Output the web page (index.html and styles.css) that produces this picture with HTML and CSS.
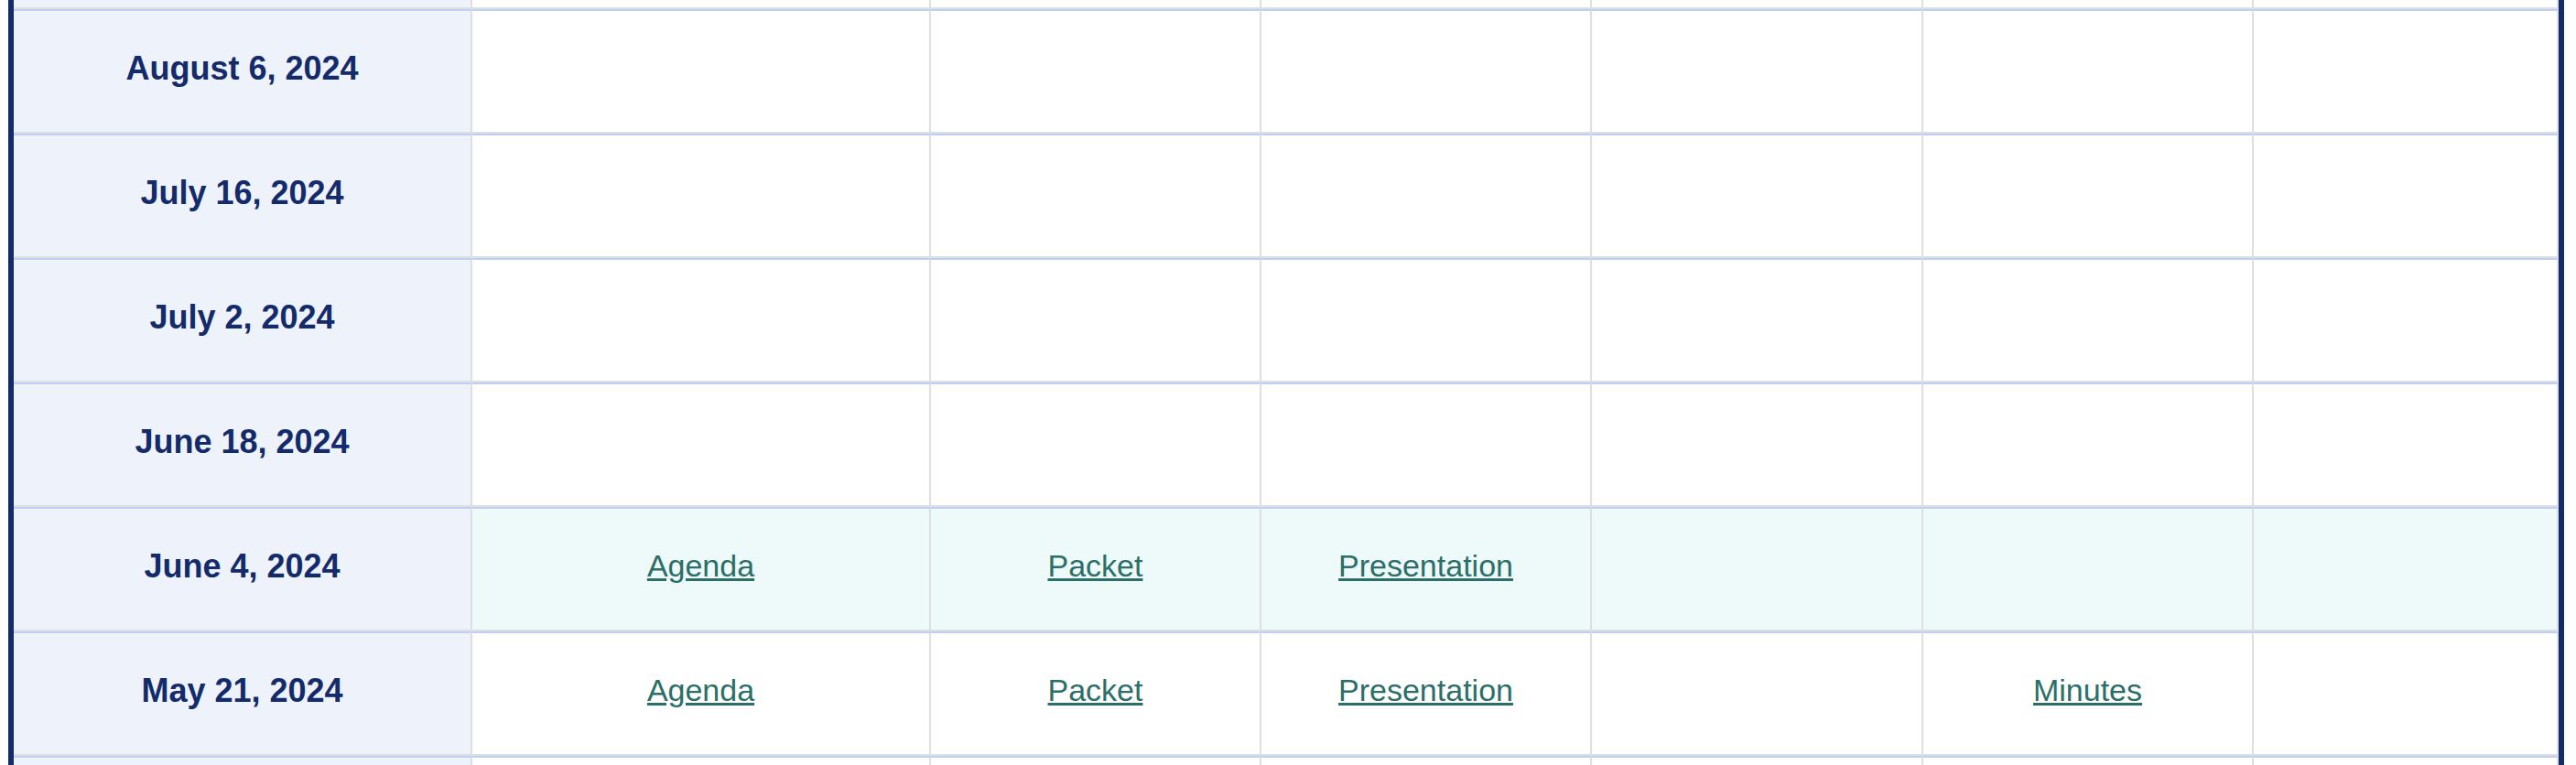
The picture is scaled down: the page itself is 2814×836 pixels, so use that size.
FILE: index.html
```html
<!DOCTYPE html>
<html lang="en">
<head>
<meta charset="utf-8">
<title>Meeting Schedule</title>
<link rel="stylesheet" href="styles.css">
</head>
<body>
<div class="schedule">
  <div class="row">
    <div class="cell date"></div>
    <div class="cell"></div><div class="cell"></div><div class="cell"></div>
    <div class="cell"></div><div class="cell"></div><div class="cell"></div>
  </div>
  <div class="row">
    <div class="cell date">August 6, 2024</div>
    <div class="cell"></div><div class="cell"></div><div class="cell"></div>
    <div class="cell"></div><div class="cell"></div><div class="cell"></div>
  </div>
  <div class="row">
    <div class="cell date">July 16, 2024</div>
    <div class="cell"></div><div class="cell"></div><div class="cell"></div>
    <div class="cell"></div><div class="cell"></div><div class="cell"></div>
  </div>
  <div class="row">
    <div class="cell date">July 2, 2024</div>
    <div class="cell"></div><div class="cell"></div><div class="cell"></div>
    <div class="cell"></div><div class="cell"></div><div class="cell"></div>
  </div>
  <div class="row">
    <div class="cell date">June 18, 2024</div>
    <div class="cell"></div><div class="cell"></div><div class="cell"></div>
    <div class="cell"></div><div class="cell"></div><div class="cell"></div>
  </div>
  <div class="row current">
    <div class="cell date">June 4, 2024</div>
    <div class="cell"><a href="#">Agenda</a></div>
    <div class="cell"><a href="#">Packet</a></div>
    <div class="cell"><a href="#">Presentation</a></div>
    <div class="cell"></div><div class="cell"></div><div class="cell"></div>
  </div>
  <div class="row">
    <div class="cell date">May 21, 2024</div>
    <div class="cell"><a href="#">Agenda</a></div>
    <div class="cell"><a href="#">Packet</a></div>
    <div class="cell"><a href="#">Presentation</a></div>
    <div class="cell"></div>
    <div class="cell"><a href="#">Minutes</a></div>
    <div class="cell"></div>
  </div>
  <div class="row">
    <div class="cell date"></div>
    <div class="cell"></div><div class="cell"></div><div class="cell"></div>
    <div class="cell"></div><div class="cell"></div><div class="cell"></div>
  </div>
</div>
</body>
</html>
```
FILE: styles.css
```css
html, body {
  margin: 0;
  padding: 0;
  background: #ffffff;
}

body {
  font-family: "Liberation Sans", Arial, Helvetica, sans-serif;
}

.schedule {
  display: grid;
  grid-template-columns: 501px 501px 361px 361px 362px 361px 333px;
  width: 2792px;
  box-sizing: border-box;
  margin: -126px 0 0 9px;
  border-left: 6px solid #132b6a;
  border-right: 6px solid #132b6a;
}

.row {
  display: contents;
}

.cell {
  box-sizing: border-box;
  height: 136px;
  padding: 0 0 7px 0;
  display: flex;
  align-items: center;
  justify-content: center;
  background: #ffffff;
  border-top: 2px solid #c0cef1;
  border-bottom: 2px solid #dedfe2;
  border-right: 2px solid #dedfe2;
  font-size: 34px;
}

.current .cell {
  background: #eefaf9;
}

.cell.date,
.current .cell.date {
  background: #eef2fb;
  color: #132b6a;
  font-weight: bold;
  font-size: 36px;
}

.cell a {
  color: #2b6f68;
  text-decoration: underline;
}
```
